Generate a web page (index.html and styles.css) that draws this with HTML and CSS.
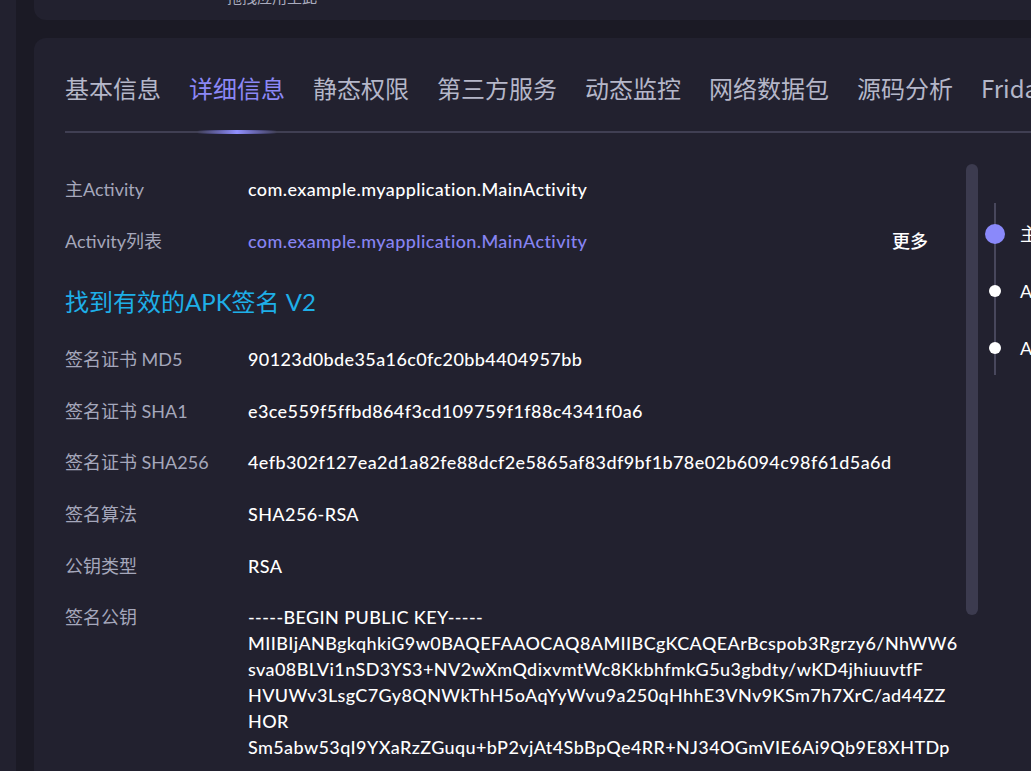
FILE: index.html
```html
<!DOCTYPE html>
<html lang="zh-CN">
<head>
<meta charset="utf-8">
<title>详细信息</title>
<link rel="stylesheet" href="styles.css">
</head>
<body>
<div class="app">
  <aside class="rail"></aside>
  <main class="main">
    <section class="drop"><span class="drop-text">拖拽应用至此</span></section>
    <section class="card">
      <nav class="tabs">
        <a class="tab">基本信息</a>
        <a class="tab active">详细信息<span class="ink"></span></a>
        <a class="tab">静态权限</a>
        <a class="tab">第三方服务</a>
        <a class="tab">动态监控</a>
        <a class="tab">网络数据包</a>
        <a class="tab">源码分析</a>
        <a class="tab">Frida</a>
      </nav>
      <div class="content">
        <div class="details">
          <div class="row"><div class="label">主Activity</div><div class="value">com.example.myapplication.MainActivity</div></div>
          <div class="row"><div class="label">Activity列表</div><div class="value split"><span class="link">com.example.myapplication.MainActivity</span><span class="more">更多</span></div></div>
          <h3 class="sig-title">找到有效的APK签名 V2</h3>
          <div class="row"><div class="label">签名证书 MD5</div><div class="value">90123d0bde35a16c0fc20bb4404957bb</div></div>
          <div class="row"><div class="label">签名证书 SHA1</div><div class="value">e3ce559f5ffbd864f3cd109759f1f88c4341f0a6</div></div>
          <div class="row"><div class="label">签名证书 SHA256</div><div class="value">4efb302f127ea2d1a82fe88dcf2e5865af83df9bf1b78e02b6094c98f61d5a6d</div></div>
          <div class="row"><div class="label">签名算法</div><div class="value">SHA256-RSA</div></div>
          <div class="row"><div class="label">公钥类型</div><div class="value">RSA</div></div>
          <div class="row"><div class="label">签名公钥</div><div class="value key">-----BEGIN PUBLIC KEY-----<br>MIIBIjANBgkqhkiG9w0BAQEFAAOCAQ8AMIIBCgKCAQEArBcspob3Rgrzy6/NhWW6<br>sva08BLVi1nSD3YS3+NV2wXmQdixvmtWc8KkbhfmkG5u3gbdty/wKD4jhiuuvtfF<br>HVUWv3LsgC7Gy8QNWkThH5oAqYyWvu9a250qHhhE3VNv9KSm7h7XrC/ad44ZZ<br>HOR<br>Sm5abw53qI9YXaRzZGuqu+bP2vjAt4SbBpQe4RR+NJ34OGmVIE6Ai9Qb9E8XHTDp</div></div>
        </div>
        <div class="scroll"><div class="thumb"></div></div>
        <ul class="anchor">
          <li class="active"><span class="dot"></span><span class="a-text">主Activity</span></li>
          <li><span class="dot"></span><span class="a-text">Activity列表</span></li>
          <li><span class="dot"></span><span class="a-text">APK签名</span></li>
        </ul>
      </div>
    </section>
  </main>
</div>
</body>
</html>
```
FILE: styles.css
```css
* { box-sizing: border-box; }
html, body {
  margin: 0;
  height: 100%;
  overflow: hidden;
  background: #1b1a25;
  font-family: "Lato", "Noto Sans CJK SC", sans-serif;
  color: #ffffff;
}
.app {
  display: flex;
  height: 771px;
  overflow: hidden;
}
.rail {
  flex: 0 0 16px;
  background: #22212f;
}
.main {
  flex: 1;
  padding-left: 18px;
  display: flex;
  flex-direction: column;
  gap: 18px;
  overflow: hidden;
  min-width: 0;
}
.drop {
  flex: 0 0 60px;
  margin-top: -40px;
  width: 1200px;
  background: #22212f;
  border-radius: 0 0 0 12px;
  display: flex;
  align-items: flex-end;
  padding: 0 0 15px 193px;
}
.drop-text {
  font-size: 15px;
  line-height: 15px;
  color: #a9abbd;
}
.card {
  width: 1200px;
  flex: 1;
  background: #22212f;
  border-radius: 12px 0 0 0;
  padding: 34px 0 0 31px;
}
.tabs {
  display: flex;
  gap: 28px;
  border-bottom: 2px solid #403f53;
  white-space: nowrap;
}
.tab {
  position: relative;
  font-size: 24px;
  line-height: 32px;
  padding-bottom: 27px;
  color: #b5b7c9;
  font-family: "Noto Sans CJK SC", sans-serif;
}
.tab.active { color: #8c88f6; }
.ink {
  position: absolute;
  left: 50%;
  bottom: -3px;
  width: 80px;
  margin-left: -40px;
  height: 4px;
  border-radius: 2px;
  background: linear-gradient(90deg, rgba(140,138,255,0) 0%, rgba(140,138,255,0.6) 30%, #9190ff 50%, rgba(140,138,255,0.6) 70%, rgba(140,138,255,0) 100%);
}
.content {
  display: flex;
  align-items: flex-start;
}
.details {
  flex: 0 0 895px;
  padding-top: 30.25px;
}
.row {
  display: grid;
  grid-template-columns: 183px 1fr;
  padding: 12.8px 0;
  line-height: 26px;
  font-size: 18px;
}
.label { color: #a5a7bb; }
.value {
  color: #ffffff;
  white-space: nowrap;
  font-weight: 500;
  letter-spacing: 0.4px;
}
.split {
  display: flex;
  justify-content: space-between;
  padding-right: 32px;
}
.link { color: #8784f2; }
.more { color: #ffffff; letter-spacing: 0; }
.sig-title {
  margin: 0;
  font-weight: 400;
  font-size: 24px;
  line-height: 28px;
  color: #1eafe8;
  padding: 21.75px 0 17.25px;
}
.scroll {
  flex: 0 0 12px;
  margin: 31px 0 0 6px;
}
.thumb {
  height: 451px;
  border-radius: 6px;
  background: #3c3b4f;
}
.anchor {
  list-style: none;
  margin: 70px 0 0 16px;
  padding: 0;
  border-left: 2px solid #48475c;
  height: 172px;
  display: flex;
  flex-direction: column;
  padding-top: 18px;
  gap: 31px;
}
.anchor li {
  position: relative;
  font-size: 18px;
  line-height: 26px;
  padding-left: 24px;
  white-space: nowrap;
  color: #ffffff;
}
.dot {
  position: absolute;
  left: -7px;
  top: 7px;
  width: 12px;
  height: 12px;
  border-radius: 50%;
  background: #ffffff;
}
.anchor li.active .dot {
  left: -11px;
  top: 3px;
  width: 20px;
  height: 20px;
  background: #8a89fa;
}
```
